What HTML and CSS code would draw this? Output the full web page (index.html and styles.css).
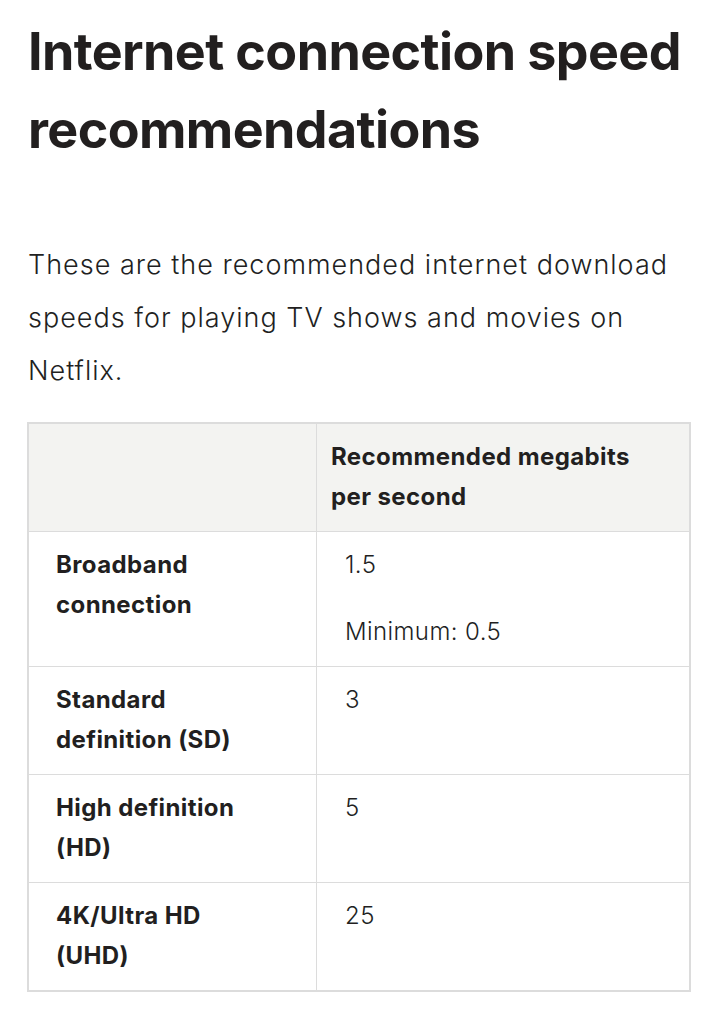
FILE: index.html
```html
<!DOCTYPE html>
<html lang="en">
<head>
<meta charset="utf-8">
<title>Internet connection speed recommendations</title>
<link rel="stylesheet" href="styles.css">
</head>
<body>
<main class="article">
  <h1 class="title">Internet connection speed recommendations</h1>
  <p class="intro">These are the recommended internet download speeds for playing TV shows and movies on Netflix.</p>
  <table class="speeds">
    <thead>
      <tr>
        <th class="label-head"></th>
        <th class="value-head">Recommended megabits per second</th>
      </tr>
    </thead>
    <tbody>
      <tr>
        <td class="label"><span class="label-text">Broadband connection</span></td>
        <td class="value"><p class="value-line">1.5</p><p class="value-line">Minimum: 0.5</p></td>
      </tr>
      <tr>
        <td class="label"><span class="label-text">Standard definition (SD)</span></td>
        <td class="value"><p class="value-line">3</p></td>
      </tr>
      <tr>
        <td class="label"><span class="label-text">High definition (HD)</span></td>
        <td class="value"><p class="value-line">5</p></td>
      </tr>
      <tr>
        <td class="label"><span class="label-text">4K/Ultra HD (UHD)</span></td>
        <td class="value"><p class="value-line">25</p></td>
      </tr>
    </tbody>
  </table>
</main>
</body>
</html>
```

FILE: styles.css
```css
html, body {
  margin: 0;
  padding: 0;
  background: #ffffff;
}

body {
  font-family: Inter, "Liberation Sans", Arial, sans-serif;
  color: #221f1f;
}

.article {
  padding: 0 27px 0 28px;
}

.title {
  margin: 13px 0 0;
  font-size: 52px;
  line-height: 78px;
  font-weight: 700;
  letter-spacing: -0.6px;
}

.intro {
  margin: 69px 0 0;
  font-size: 27px;
  line-height: 53px;
  font-weight: 300;
  letter-spacing: 1px;
}

.speeds {
  margin: 25px 0 0 -1px;
  width: 664px;
  border-collapse: collapse;
  border: 2px solid #dcdcdc;
}

.speeds th,
.speeds td {
  border: 1px solid #dcdcdc;
  vertical-align: top;
  text-align: left;
  font-size: 24px;
  line-height: 40px;
  letter-spacing: 0.4px;
}

.label-head {
  width: 287px;
  background: #f3f3f1;
  padding: 13px 0 14px;
}

.value-head {
  background: #f3f3f1;
  font-weight: 700;
  padding: 13px 40px 14px 14px;
}

.label {
  padding: 13px 50px 14px 27px;
  font-weight: 700;
}

.value {
  padding: 13px 20px 14px 28px;
  font-weight: 300;
}

.value-line {
  margin: 0;
}

.value-line + .value-line {
  margin-top: 27px;
}
```
